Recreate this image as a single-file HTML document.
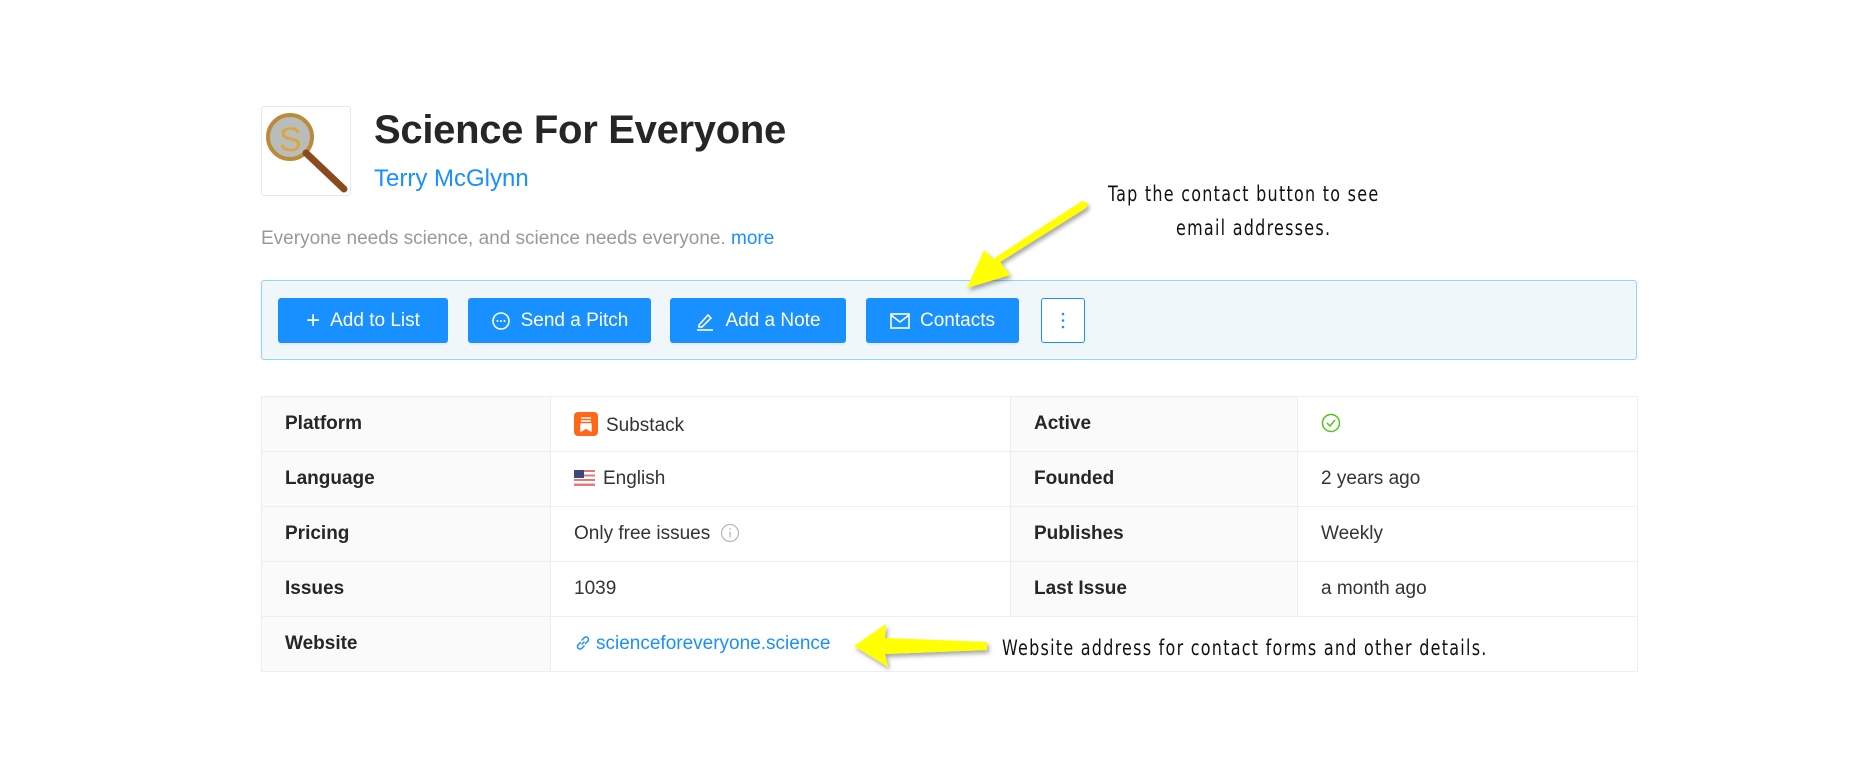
<!DOCTYPE html>
<html><head><meta charset="utf-8"><style>
*{box-sizing:border-box;margin:0;padding:0}
body{width:1850px;height:777px;background:#fff;font-family:"Liberation Sans",sans-serif;color:#333;position:relative;overflow:hidden}
.abs{position:absolute}
.logo{left:261px;top:106px;width:90px;height:90px;border:1px solid #e8e8e8;border-radius:3px;background:#fff}
.title{left:374px;top:108px;font-size:40px;font-weight:bold;color:#262626;letter-spacing:-0.3px}
.author{left:374px;top:165px;font-size:24px;color:#1890ff}
.desc{left:261px;top:228px;font-size:19px;color:#999}
.desc span{color:#1890ff}
.bar{left:261px;top:280px;width:1376px;height:80px;background:#f0f7fb;border:1px solid #91d5ff;border-radius:3px}
.btn{position:absolute;top:298px;height:45px;background:#1890ff;color:#fff;border-radius:3px;font-size:19px;display:flex;align-items:center;justify-content:center;gap:10px;box-shadow:0 2px 0 rgba(0,0,0,.04)}
.more{position:absolute;left:1041px;top:298px;width:44px;height:45px;border:1px solid #1890ff;border-radius:3px;background:#fff}
table{position:absolute;left:261px;top:396px;width:1377px;border-collapse:collapse;font-size:19px}
td{height:55px;border:1px solid #eee;padding:0 0 0 0}
td.l{background:#fafafa;color:#262626;font-weight:bold;padding-left:23px}
td.v{padding-left:23px;color:#333}
.note{font-family:"DejaVu Sans Condensed","DejaVu Sans",sans-serif;font-size:21px;color:#111;letter-spacing:1.5px;transform:scaleX(.845);transform-origin:left top;white-space:nowrap}
</style></head><body>
<div class="abs logo"><svg width="88" height="88" viewBox="0 0 88 88"><circle cx="28" cy="30" r="22" fill="#b9bcb8" stroke="#b98b3a" stroke-width="4"/><text x="17" y="44" font-size="34" fill="#d9a640" font-family="Liberation Sans">S</text><line x1="44" y1="46" x2="82" y2="82" stroke="#8b4a1e" stroke-width="7" stroke-linecap="round"/></svg></div>
<div class="abs title">Science For Everyone</div>
<div class="abs author">Terry McGlynn</div>
<div class="abs desc">Everyone needs science, and science needs everyone. <span>more</span></div>
<div class="abs bar"></div>
<div class="btn" style="left:278px;width:170px"><span style="font-size:24px;font-weight:300">+</span>Add to List</div>
<div class="btn" style="left:468px;width:183px"><svg width="20" height="20" viewBox="0 0 20 20"><circle cx="10" cy="10" r="8" fill="none" stroke="#fff" stroke-width="1.6"/><circle cx="6.5" cy="10" r="1" fill="#fff"/><circle cx="10" cy="10" r="1" fill="#fff"/><circle cx="13.5" cy="10" r="1" fill="#fff"/></svg>Send a Pitch</div>
<div class="btn" style="left:670px;width:176px"><svg width="20" height="20" viewBox="0 0 20 20"><path d="M4 14 L13 4 L16 7 L7 16 L4 16 Z" fill="none" stroke="#fff" stroke-width="1.6"/><line x1="2" y1="19" x2="18" y2="19" stroke="#fff" stroke-width="1.6"/></svg>Add a Note</div>
<div class="btn" style="left:866px;width:153px"><svg width="20" height="16" viewBox="0 0 20 16"><rect x="1" y="1" width="18" height="14" fill="none" stroke="#fff" stroke-width="1.6"/><path d="M1 2 L10 9 L19 2" fill="none" stroke="#fff" stroke-width="1.6"/></svg>Contacts</div>
<div class="more"><svg width="42" height="43"><circle cx="21" cy="15" r="1.3" fill="#1890ff"/><circle cx="21" cy="21.5" r="1.3" fill="#1890ff"/><circle cx="21" cy="28" r="1.3" fill="#1890ff"/></svg></div>
<table>
<colgroup><col style="width:289px"><col style="width:460px"><col style="width:287px"><col></colgroup>
<tr><td class="l">Platform</td><td class="v"><svg width="24" height="24" style="vertical-align:-5px;margin-right:8px"><rect width="24" height="24" rx="4" fill="#ff6719"/><path d="M7 6h10M7 9h10M7 12h10v7l-5-3-5 3z" stroke="#fff" fill="#fff" stroke-width="1.4"/></svg>Substack</td><td class="l">Active</td><td class="v"><svg width="20" height="20" style="vertical-align:-3px"><circle cx="10" cy="10" r="8.5" fill="none" stroke="#52c41a" stroke-width="1.5"/><path d="M6 10l3 3 5-6" fill="none" stroke="#52c41a" stroke-width="1.5"/></svg></td></tr>
<tr><td class="l">Language</td><td class="v"><svg width="21" height="16" style="vertical-align:-2px;margin-right:8px"><rect width="21" height="16" fill="#fff"/><rect y="0" width="21" height="2" fill="#e07a7a"/><rect y="4.5" width="21" height="2" fill="#e07a7a"/><rect y="9" width="21" height="2" fill="#e07a7a"/><rect y="13.5" width="21" height="2.5" fill="#e07a7a"/><rect width="10" height="8" fill="#3c4a7a"/></svg>English</td><td class="l">Founded</td><td class="v">2 years ago</td></tr>
<tr><td class="l">Pricing</td><td class="v">Only free issues <svg width="20" height="20" style="vertical-align:-4px;margin-left:4px"><circle cx="10" cy="10" r="8.5" fill="none" stroke="#bbb" stroke-width="1.3"/><rect x="9.3" y="8.5" width="1.4" height="6" fill="#bbb"/><circle cx="10" cy="6" r="0.9" fill="#bbb"/></svg></td><td class="l">Publishes</td><td class="v">Weekly</td></tr>
<tr><td class="l">Issues</td><td class="v">1039</td><td class="l">Last Issue</td><td class="v">a month ago</td></tr>
<tr><td class="l">Website</td><td class="v" colspan="3" style="color:#1890ff"><svg width="18" height="18" style="vertical-align:-3px;margin-right:4px" viewBox="0 0 18 18"><path d="M8 10 L10 8 M6.5 8.5 L4 11a2.5 2.5 0 0 0 3.5 3.5L10 12 M11.5 9.5 L14 7a2.5 2.5 0 0 0-3.5-3.5L8 6" fill="none" stroke="#1890ff" stroke-width="1.5" stroke-linecap="round"/></svg>scienceforeveryone.science</td></tr>
</table>
<svg class="abs" style="left:0;top:0" width="1850" height="777">
<defs><filter id="sh"><feDropShadow dx="2" dy="3" stdDeviation="2" flood-opacity=".35"/></filter></defs>
<path d="M1088 203 L1086 208 L1000 262 L1010 275 L967 288 L984 250 L993 259 L1082 201 Z" fill="#ffff00" filter="url(#sh)"/>
<path d="M987 642 L987 650 L885 654 L888 667 L854 646 L886 624 L885 638 Z" fill="#ffff00" filter="url(#sh)"/>
</svg>
<div class="abs note" style="left:1108px;top:182px">Tap the contact button to see</div>
<div class="abs note" style="left:1176px;top:216px">email addresses.</div>
<div class="abs note" style="left:1002px;top:636px">Website address for contact forms and other details.</div>
</body></html>
